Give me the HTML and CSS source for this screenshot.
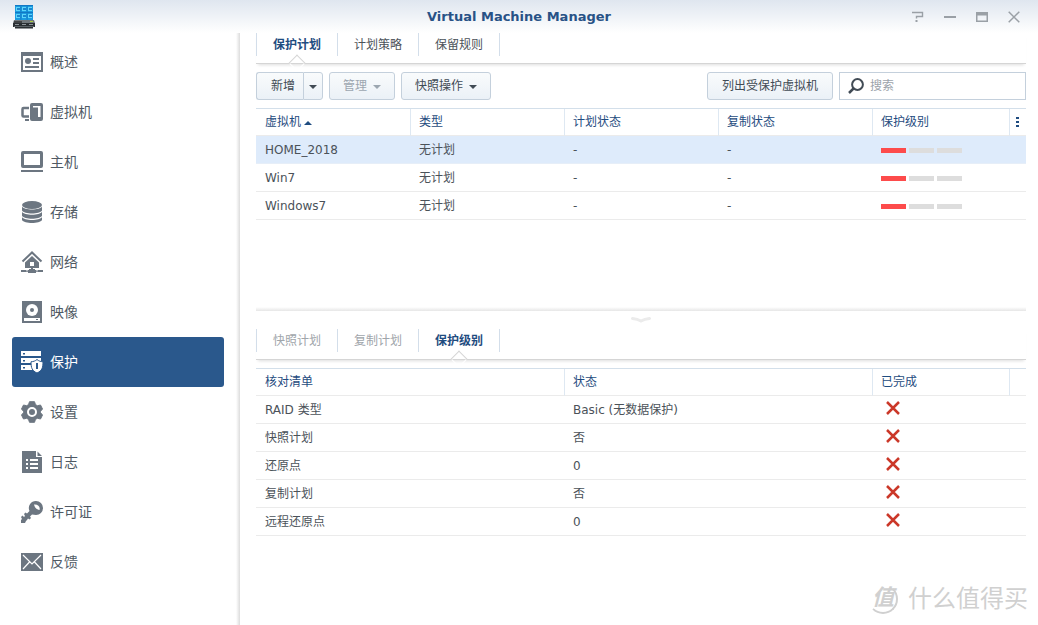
FILE: index.html
```html
<!DOCTYPE html>
<html lang="zh-CN">
<head>
<meta charset="utf-8">
<title>Virtual Machine Manager</title>
<link rel="stylesheet" href="styles.css">
</head>
<body>
<div class="window">
  <header class="titlebar">
    <svg class="app-icon" viewBox="0 0 24 24" aria-hidden="true">
      <path fill="#1b9be0" d="M3 0h18v16H3z"/>
      <path fill="#1278c4" d="M3 0h18v1H3zM3 7h18v1H3zM8.500 0h.8v15h-.8zM14.700 0h.8v15h-.8z"/>
      <path fill="#5dd5fa" d="M4 2h4v4H4zM10 2h4v4h-4zM16 2h4v4h-4zM4 9h4v4H4zM10 9h4v4h-4zM16 9h4v4h-4z"/>
      <path fill="#1b86cf" d="M5 3h3v2H5zM11 3h3v2h-3zM17 3h3v2h-3zM5 10h3v2H5zM11 10h3v2h-3zM17 10h3v2h-3z"/>
      <path fill="#70777c" d="M2 15h20l1 3H1z"/>
      <path fill="#292e32" d="M1 18h22v4H1zM3 22h18v1.500H3z"/>
      <path fill="#111" d="M2 16.500h8v1H2z"/>
      <path fill="#a7ce3c" d="M18 16h3v1h-3z"/>
      <path fill="#8c9499" d="M3 19h4v1H3zM10 19h4v1h-4zM17 19h4v1h-4zM2 21h20v.6H2z"/>
    </svg>
    <h1 class="title">Virtual Machine Manager</h1>
    <div class="window-tools">
      <button class="tool" aria-label="帮助"><svg viewBox="0 0 12 12"><path d="M0 1.500h10.500v4H4.500v2" fill="none" stroke="#9aa0a6" stroke-width="1.400"/><path d="M3.500 9h2v2h-2z" fill="#9aa0a6"/></svg></button>
      <button class="tool" aria-label="最小化"><svg viewBox="0 0 12 12"><path d="M0 5h12v2H0z" fill="#9aa0a6"/></svg></button>
      <button class="tool" aria-label="最大化"><svg viewBox="0 0 12 12"><path fill-rule="evenodd" d="M0 1h12v10H0zM1.500 4.500v5h9v-5z" fill="#9aa0a6"/></svg></button>
      <button class="tool" aria-label="关闭"><svg viewBox="0 0 12 12"><path d="M.7.700l10.600 10.600M11.300.700L.7 11.300" stroke="#9aa0a6" stroke-width="1.500"/></svg></button>
    </div>
  </header>
  <div class="body">
    <nav class="sidebar">
      <a class="nav-item" href="#"><svg viewBox="0 0 22 22"><path fill-rule="evenodd" d="M0 1h22v20H0zM2 5v14h18V5z"/><circle cx="7" cy="10" r="3"/><path d="M12 7h6v2h-6zM12 11h6v2h-6zM4 15h14v2H4z"/></svg>概述</a>
      <a class="nav-item" href="#"><svg viewBox="0 0 22 22"><path d="M8 7H2.500Q1.500 7 1.500 8v6.500q0 1 1 1H8" fill="none" stroke="currentColor" stroke-width="2.500"/><path d="M4 18h4v2H4z"/><path fill-rule="evenodd" d="M11 2h9q2 0 2 2v14q0 2-2 2h-9q-2 0-2-2V4q0-2 2-2zM12 5v1.500h5V16h2.500V5z"/></svg>虚拟机</a>
      <a class="nav-item" href="#"><svg viewBox="0 0 22 22"><path fill-rule="evenodd" d="M2 0h18q2 0 2 2v13q0 2-2 2H2q-2 0-2-2V2q0-2 2-2zm1 3v11h16V3zM0 19h22v2H0z"/></svg>主机</a>
      <a class="nav-item" href="#"><svg viewBox="0 0 22 22"><ellipse cx="11" cy="4" rx="10" ry="4"/><path d="M1 5.500c2 4 18 4 20 0v4c-2 4-18 4-20 0zM1 10.700c2 4 18 4 20 0v4c-2 4-18 4-20 0zM1 15.900c2 4 18 4 20 0V19c-2 4-18 4-20 0z"/></svg>存储</a>
      <a class="nav-item" href="#"><svg viewBox="0 0 22 22"><path d="M1.500 10.500L11 1.500l9.500 9" fill="none" stroke="currentColor" stroke-width="2"/><path fill-rule="evenodd" d="M11 5l7 6.500V17h-6v1h2v1h8v2h-7v1H7v-1H0v-2h8v-1h2v-1H4v-5.500zM9 11v4h4v-4z"/><path d="M6 18.500v2M16 18.500v2" stroke="#fff"/></svg>网络</a>
      <a class="nav-item" href="#"><svg viewBox="0 0 22 22"><path fill-rule="evenodd" d="M1 0h20v22H1zM3 17v3h16v-3z"/><circle cx="11" cy="9" r="6" fill="#fff"/><circle cx="11" cy="9" r="2"/><path d="M15 18h2v1h-2z"/></svg>映像</a>
      <a class="nav-item active" href="#" aria-current="page"><svg viewBox="0 0 22 22"><path fill-rule="evenodd" d="M0 0h20v5H0zM2 2v1.500h2V2zM0 7h20v5H0zM2 9v1.500h2V9zM0 14h12v5H0zM2 16v1.500h2V16z"/><path d="M16 8.500c2 1.700 3.500 2 6 2.300 0 6-1 9-6 11.200-5-2.200-6-5.200-6-11.200 2.500-.3 4-.6 6-2.300z" stroke="#2a588c"/><path fill="#2a588c" d="M15 12h2v6h-2z"/></svg>保护</a>
      <a class="nav-item" href="#"><svg viewBox="0 0 22 22"><path stroke="currentColor" stroke-linejoin="round" d="M8.500.700h5l1 3 2 1 3-.7 2 4-2 2.300v1.400l2 2.300-2 4-3-.7-2 1-1 3h-5l-1-3-2-1-3 .7-2-4 2-2.300v-1.400L.5 8l2-4 3 .7 2-1z"/><circle cx="11" cy="11" r="4" fill="none" stroke="#fff" stroke-width="2"/></svg>设置</a>
      <a class="nav-item" href="#"><svg viewBox="0 0 22 22"><path d="M1 0h14v6h6v16H1zM16.500.500L21 5h-4.500z"/><path fill="#fff" d="M5 8h2v2H5zM9 8h8v2H9zM5 12h2v2H5zM9 12h8v2H9zM5 16h2v2H5zM9 16h8v2H9z"/></svg>日志</a>
      <a class="nav-item" href="#"><svg viewBox="0 0 22 22"><path fill-rule="evenodd" d="M15 0a7 7 0 0 1 0 14l-4-.5-2 2 1 1.500-1.500 1.500L7 17.500 6 19l-1 1-1 2H0v-3l1-1-1-2 1.500-1.500L3 16l1-1-1-2 1.500-1.500L6 12.500 8.500 10A7 7 0 0 1 15 0zM13 3.500c1 4 3 5 5.500 5.500 1-3-1.500-6-5.500-5.500z"/></svg>许可证</a>
      <a class="nav-item" href="#"><svg viewBox="0 0 22 22"><path d="M0 2h22v18H0z"/><path d="M2 4l9 9 9-9M2 18l6.500-7M20 18l-6.500-7" fill="none" stroke="#fff" stroke-width="1.200"/></svg>反馈</a>
    </nav>
    <main class="content">
      <section class="pane upper">
        <div class="tabs" role="tablist">
          <button class="tab selected" role="tab" aria-selected="true">保护计划</button>
          <button class="tab" role="tab">计划策略</button>
          <button class="tab" role="tab">保留规则</button>
        </div>
        <div class="toolbar">
          <div class="split">
            <button class="btn">新增</button>
            <button class="btn drop" aria-label="更多新增选项"><span class="caret"></span></button>
          </div>
          <button class="btn menu" disabled>管理<span class="caret"></span></button>
          <button class="btn menu">快照操作<span class="caret"></span></button>
          <button class="btn list-btn">列出受保护虚拟机</button>
          <label class="search">
            <svg viewBox="0 0 16 16" aria-hidden="true"><circle cx="9.500" cy="6.500" r="5.400" fill="none" stroke="#414b55" stroke-width="2"/><path d="M6 10l-5 5" stroke="#414b55" stroke-width="2.500"/></svg>
            <input type="text" placeholder="搜索" aria-label="搜索">
          </label>
        </div>
        <table class="grid">
          <colgroup><col class="fifth"><col class="fifth"><col class="fifth"><col class="fifth"><col><col class="last"></colgroup>
          <thead><tr><th>虚拟机<span class="sort"></span></th><th>类型</th><th>计划状态</th><th>复制状态</th><th>保护级别</th><th class="more"><svg viewBox="0 0 3 10" role="img" aria-label="列选项"><path d="M0 0h3v2H0zM0 4h3v2H0zM0 8h3v2H0z" fill="#1f4c80"/></svg></th></tr></thead>
          <tbody>
            <tr class="picked"><td>HOME_2018</td><td>无计划</td><td>-</td><td>-</td><td><span class="level"><i class="on"></i><i></i><i></i></span></td><td></td></tr>
            <tr><td>Win7</td><td>无计划</td><td>-</td><td>-</td><td><span class="level"><i class="on"></i><i></i><i></i></span></td><td></td></tr>
            <tr><td>Windows7</td><td>无计划</td><td>-</td><td>-</td><td><span class="level"><i class="on"></i><i></i><i></i></span></td><td></td></tr>
          </tbody>
        </table>
      </section>
      <button class="splitter" aria-label="折叠面板"><svg viewBox="0 0 20 6"><path d="M1.500 1.500q5 .5 8.500 2.500 3.500-2 8.500-2.500" fill="none" stroke="#ebebeb" stroke-width="3" stroke-linecap="round"/></svg></button>
      <section class="pane">
        <div class="tabs" role="tablist">
          <button class="tab" role="tab" disabled>快照计划</button>
          <button class="tab" role="tab" disabled>复制计划</button>
          <button class="tab selected" role="tab" aria-selected="true">保护级别</button>
        </div>
        <table class="grid">
          <colgroup><col class="two-fifths"><col class="two-fifths"><col><col class="last"></colgroup>
          <thead><tr><th>核对清单</th><th>状态</th><th>已完成</th><th></th></tr></thead>
          <tbody>
            <tr><td>RAID 类型</td><td>Basic (无数据保护)</td><td><svg class="cross" viewBox="0 0 14 14" role="img" aria-label="否"><path d="M1 1l12 12M13 1L1 13"/></svg></td><td></td></tr>
            <tr><td>快照计划</td><td>否</td><td><svg class="cross" viewBox="0 0 14 14" role="img" aria-label="否"><path d="M1 1l12 12M13 1L1 13"/></svg></td><td></td></tr>
            <tr><td>还原点</td><td>0</td><td><svg class="cross" viewBox="0 0 14 14" role="img" aria-label="否"><path d="M1 1l12 12M13 1L1 13"/></svg></td><td></td></tr>
            <tr><td>复制计划</td><td>否</td><td><svg class="cross" viewBox="0 0 14 14" role="img" aria-label="否"><path d="M1 1l12 12M13 1L1 13"/></svg></td><td></td></tr>
            <tr><td>远程还原点</td><td>0</td><td><svg class="cross" viewBox="0 0 14 14" role="img" aria-label="否"><path d="M1 1l12 12M13 1L1 13"/></svg></td><td></td></tr>
          </tbody>
        </table>
      </section>
    </main>
  </div>
  <div class="watermark"><span class="seal">值</span><span>什么值得买</span></div>
</div>
</body>
</html>
```
FILE: styles.css
```css
* { box-sizing: border-box; }

body {
  margin: 0;
  background: #fff;
  color: #4b5259;
  font: 12px/20px "DejaVu Sans", "Noto Sans CJK SC", sans-serif;
}

button, input { font: inherit; color: inherit; }
button { cursor: pointer; }

.window {
  position: relative;
  display: flex;
  flex-direction: column;
  min-height: 100vh;
}

.titlebar {
  display: grid;
  grid-template-columns: 1fr auto 1fr;
  align-items: center;
  height: 33px;
  padding: 0 18px 0 12px;
  padding: 0 12px;
  background: linear-gradient(#dfe6ef, #fff);
}
.app-icon { width: 24px; height: 24px; }
.title {
  margin: 0;
  color: #285286;
  font-size: 13px;
  line-height: 20px;
  font-weight: bold;
}
.window-tools { display: flex; justify-content: flex-end; gap: 20px; padding-right: 6px; }
.tool { display: block; padding: 0; border: 0; background: none; }
.tool svg { display: block; width: 12px; height: 12px; }

.body { display: flex; flex: 1; }

.sidebar {
  flex: 0 0 240px;
  padding: 4px 16px 4px 12px;
  background: linear-gradient(to left, #dcdcdc, #fff 4px);
}
.nav-item {
  display: flex;
  align-items: center;
  gap: 7px;
  height: 50px;
  padding-left: 9px;
  border-radius: 3px;
  color: #505a64;
  font-size: 14px;
  text-decoration: none;
}
.nav-item svg { width: 22px; height: 22px; fill: currentColor; color: #6c7681; }
.nav-item.active { background: #2a588c; color: #fff; }
.nav-item.active svg { color: #fff; }

.content {
  flex: 1;
  min-width: 0;
  padding: 0 12px 0 16px;
}
.upper { min-height: 274px; }

.tabs {
  display: flex;
  height: 31px;
  margin-bottom: 8px;
  padding-bottom: 7px;
  border-bottom: 1px solid #d5d5d5;
  box-shadow: 0 3px 3px -2px #ddd;
}
.tab {
  position: relative;
  padding: 0 16px;
  border: 0;
  border-left: 1px solid #d3deea;
  background: none;
}
.tab:last-child { border-right: 1px solid #d3deea; }
.tab:disabled { color: #a0a5aa; }
.tab.selected { color: #1f4c80; font-weight: bold; }
.tab.selected::after {
  content: "";
  position: absolute;
  left: 50%;
  bottom: -13px;
  width: 10px;
  height: 10px;
  margin-left: -6px;
  border: 1px solid #d5d5d5;
  border-color: #d5d5d5 transparent transparent #d5d5d5;
  background: linear-gradient(135deg, #fff 50%, transparent 50%);
  transform: rotate(45deg);
}

.toolbar { display: flex; gap: 6px; margin-bottom: 8px; }
.btn {
  height: 28px;
  padding: 0 14px;
  border: 1px solid #c4d0dc;
  border-radius: 3px;
  background: linear-gradient(#f9fbfc, #ebf1f7);
  color: #414b55;
}
.btn:disabled { color: #9ca6b0; }
.split { display: flex; }
.split .btn:first-child { padding: 0 8px 0 14px; border-right: 0; border-radius: 3px 0 0 3px; }
.split .drop { padding: 0 5px; border-radius: 0 3px 3px 0; }
.caret {
  display: inline-block;
  vertical-align: middle;
  border: 4px solid transparent;
  border-top-color: currentColor;
  border-bottom: 0;
}
.menu { padding: 0 13px; }
.menu .caret { margin-left: 6px; }
.list-btn { margin-left: auto; }

.search {
  display: flex;
  align-items: center;
  gap: 6px;
  width: 187px;
  height: 28px;
  padding: 0 8px;
  border: 1px solid #c4d0dc;
}
.search svg { flex: none; width: 16px; height: 16px; }
.search input { width: 100%; min-width: 0; padding: 0; border: 0; outline: 0; background: none; }
.search input::placeholder { color: #9ca3aa; opacity: 1; }

.grid {
  width: 100%;
  table-layout: fixed;
  border-spacing: 0;
  border-top: 1px solid #d3dfea;
}
.fifth { width: 20%; }
.two-fifths { width: 40%; }
.last { width: 17px; }
.grid th, .grid td {
  padding: 0 8px 0 9px;
  border-bottom: 1px solid #ebebeb;
  text-align: left;
  white-space: nowrap;
}
.grid th { height: 27px; color: #1f4c80; font-weight: normal; }
.grid th + th { padding-left: 8px; border-left: 1px solid #dee8f2; }
.grid td { height: 28px; }
.grid .picked td { background: #deebfb; border-color: #e6eef8; }
.grid .more { padding: 0 0 0 6px; }
.more svg { display: block; width: 3px; height: 10px; }
.sort {
  display: inline-block;
  margin-left: 3px;
  vertical-align: middle;
  border: 4px solid transparent;
  border-bottom-color: #1f4c80;
  border-top: 0;
}
.level { display: flex; gap: 3px; padding-top: 2px; }
.level i { width: 25px; height: 5px; background: #ddd; }
.level .on { background: #fd4b4b; }
.cross { display: block; width: 14px; height: 14px; margin: 0 0 3px 5px; }
.cross path { fill: none; stroke: #cb3829; stroke-width: 2.500; }

.splitter {
  display: block;
  width: 100%;
  height: 22px;
  padding: 0;
  border: 0;
  background: linear-gradient(#fff, #e6e6e6) top / 100% 4px no-repeat;
}
.splitter svg { display: block; width: 20px; height: 6px; margin: 4px auto 0; }

.watermark {
  position: absolute;
  right: 10px;
  bottom: 8px;
  display: flex;
  align-items: center;
  gap: 10px;
  color: #d0d0d0;
  font-size: 24px;
  line-height: 36px;
  pointer-events: none;
}
.seal {
  width: 30px;
  height: 30px;
  border: 2px solid #d0d0d0;
  border-color: transparent #d0d0d0 #d0d0d0 transparent;
  border-radius: 50%;
  font-size: 22px;
  font-style: italic;
  font-weight: bold;
  line-height: 24px;
  text-align: center;
}
```
